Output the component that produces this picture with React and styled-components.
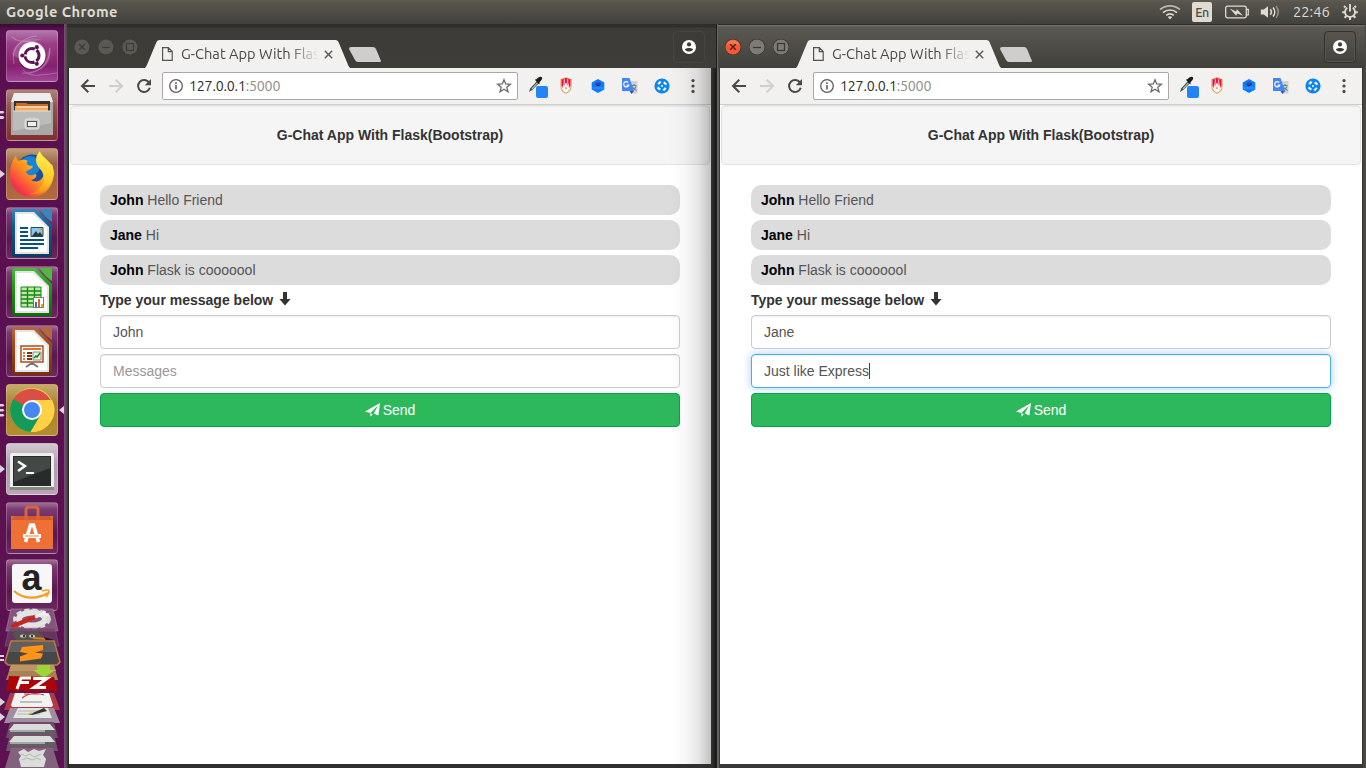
import React from "react";
import styled, { createGlobalStyle } from "styled-components";

const GlobalStyle = createGlobalStyle`
  * { box-sizing: border-box; }
  html, body { margin: 0; padding: 0; overflow: hidden; background: #2c2b29; }
  svg { display: block; flex: none; }
`;

const uiFont = `"Ubuntu", "Noto Sans", "Open Sans", sans-serif`;

/* ---------- desktop ---------- */
const Desktop = styled.div`
  width: 1366px;
  height: 768px;
  display: flex;
  flex-direction: column;
  overflow: hidden;
`;
const Panel = styled.header`
  height: 24px;
  flex: none;
  display: flex;
  align-items: center;
  padding: 0 8px 0 6px;
  background: linear-gradient(#5f5d53 0, #57554d 10%, #42413c 100%);
  color: #dfdbd2;
  font-family: ${uiFont};
`;
const AppName = styled.div`
  font-size: 14.67px;
  font-weight: 700;
  line-height: 24px;
  letter-spacing: 0.42px;
`;
const Indicators = styled.div`
  margin-left: auto;
  display: flex;
  align-items: center;
  height: 24px;
`;
const Keyboard = styled.div`
  width: 20px;
  height: 20px;
  margin: 0 13px 0 11px;
  border-radius: 2px;
  background: #dfdbd2;
  color: #4a4842;
  font-size: 12.5px;
  font-weight: 500;
  line-height: 21px;
  text-align: center;
  letter-spacing: -0.4px;
`;
const Clock = styled.div`
  margin: 0 12px 0 13px;
  font-size: 14.67px;
  line-height: 24px;
  width: 37px;
  white-space: nowrap;
`;
const Workspace = styled.main`
  flex: 1;
  display: flex;
  min-height: 0;
`;

/* ---------- launcher ---------- */
const Launcher = styled.nav`
  width: 65px;
  flex: none;
  display: flex;
  flex-direction: column;
  padding-top: 6px;
  background: linear-gradient(#3a0a34 0, #5a1050 6px, #5c1150 100%);
  border-right: 1px solid #7d4a76;
  overflow: hidden;
`;
const LauncherRow = styled.div`
  height: ${(p) => p.$h || 59}px;
  flex: none;
  display: grid;
  grid-template-columns: 6px 52px 6px;
`;
const Pips = styled.div`
  height: 52px;
  display: flex;
  flex-direction: column;
  justify-content: center;
`;
const Tile = styled.div`
  width: 52px;
  height: 52px;
  border-radius: 4px;
  border: 1px solid rgba(255, 255, 255, 0.22);
  background: ${(p) => p.$bg};
  svg { margin: -1px; }
`;
const FoldedRow = styled.div`
  height: ${(p) => p.$h}px;
  flex: none;
  svg { overflow: visible; }
`;

/* ---------- windows ---------- */
const WindowFrame = styled.section`
  width: ${(p) => (p.$active ? 649 : 652)}px;
  flex: none;
  display: flex;
  flex-direction: column;
  padding: 0 ${(p) => (p.$active ? 4 : 6)}px 4px ${(p) => (p.$active ? 3 : 4)}px;
  background: ${(p) =>
    p.$active
      ? "linear-gradient(90deg,#5b5a56 0,#72706b 1px,#454440 2px,#3a3936 3px,#3a3936 645px,#33322f 645px,#4a4845 647px,#4a4845 649px)"
      : "linear-gradient(90deg,#55544f 0,#4d4c47 2px,#252523 3px,#30302c 4px,#30302c 646px,#353433 646px,#222 650px,#111 651px,#2a2a2a 652px)"};
`;
const TitleBar = styled.div`
  height: 44px;
  flex: none;
  display: flex;
  align-items: flex-end;
  margin: 0 ${(p) => (p.$active ? "-3px 0 -2px" : "-5px 0 -2px")};
  padding: 0 ${(p) => (p.$active ? "9px 0 7px" : "11px 0 7px")};
  background: ${(p) =>
    p.$active
      ? "linear-gradient(#2d2c2a 0,#2d2c2a 1px,#7b7972 1px,#5b5951 3px,#403f3a 100%)"
      : "linear-gradient(#2c2b29 0,#34332f 2px,#282725 2px,#3c3b37 4px,#3e3d38 100%)"};
`;
const WindowButtons = styled.div`
  display: flex;
  gap: 8px;
  height: 44px;
  padding-top: 15px;
  margin-right: 7px;
`;
const Tab = styled.div`
  width: 206px;
  height: 28px;
  display: flex;
  align-items: center;
  padding-left: 17px;
  background: #f2f1f0;
  clip-path: path("M0 28 L1.500 26 L11.500 2 Q12.500 0 14.500 0 L190.500 0 Q192.500 0 193.500 2 L203.500 26 L205 28 Z");
`;
const TabTitle = styled.div`
  width: 137px;
  margin-left: 8px;
  overflow: hidden;
  white-space: nowrap;
  font: 14.67px/28px ${uiFont};
  color: #4a4844;
  mask-image: linear-gradient(90deg, #000 108px, transparent 138px);
`;
const NewTab = styled.div`
  width: 33px;
  height: 15px;
  margin: 0 0 6px -2px;
  background: #cfcecd;
  clip-path: path("M0 2 Q0 0 2 0 L24 0 Q26 0 27 2 L32 14 Q32 15 31 15 L9 15 Q7 15 6 13 Z");
`;
const Profile = styled.div`
  width: 32px;
  height: 32px;
  margin: 0 0 5px auto;
  display: grid;
  place-items: center;
  border: 1px solid ${(p) => (p.$active ? "#33322e" : "#46453f")};
  border-radius: 4px;
  box-shadow: ${(p) => (p.$active ? "inset 0 0 0 1px #57554e" : "none")};
`;
const Body = styled.div`
  position: relative;
  flex: 1;
  display: flex;
  flex-direction: column;
  background: #fff;
  ${(p) =>
    !p.$active &&
    `&::after {
      content: "";
      position: absolute;
      inset: 0 0 0 auto;
      width: 42px;
      pointer-events: none;
      background: linear-gradient(90deg, transparent, rgba(0,0,0,.025) 35%, rgba(0,0,0,.09) 68%, rgba(0,0,0,.24));
    }`}
`;
const Toolbar = styled.div`
  height: 37px;
  flex: none;
  display: flex;
  align-items: center;
  padding: 0 0 1px 11px;
  background: #f2f1f0;
  border-bottom: 1px solid #cfcdca;
`;
const NavButtons = styled.div`
  display: flex;
  gap: 12px;
`;
const Omnibox = styled.div`
  width: 356px;
  height: 28px;
  display: flex;
  align-items: center;
  margin-left: 10px;
  padding: 0 5px;
  background: #fff;
  border: 1px solid #a9a8a6;
  border-radius: 2px;
`;
const Url = styled.div`
  flex: 1;
  margin-left: 5px;
  font: 14.2px/26px ${uiFont};
  letter-spacing: -0.2px;
  color: #2b2a27;
  span { color: #8d8a86; }
`;
const Extensions = styled.div`
  display: flex;
  margin-left: 10px;
  gap: 11px;
  svg:first-child { overflow: visible; }
  svg:last-child { margin-left: 6.5px; }
`;

/* ---------- web page ---------- */
const Page = styled.div`
  padding: 0 1px;
  font: 14px/20px "Liberation Sans", Arial, sans-serif;
  color: #333;
`;
const Well = styled.div`
  padding: 19px;
  border: 1px solid #e3e3e3;
  border-radius: 4px;
  background: #f5f5f5;
  box-shadow: inset 0 1px 1px rgba(0, 0, 0, 0.05);
  text-align: center;
  font-weight: 700;
`;
const Chat = styled.div`
  display: flex;
  flex-direction: column;
  gap: 5px;
  padding: 20px 30px;
`;
const Message = styled.div`
  padding: 5px 10px;
  border-radius: 10px;
  background: #dcdcdc;
  color: #555;
  b { color: #000; }
`;
const Label = styled.div`
  display: flex;
  height: 20px;
  font-weight: 700;
  svg { margin: 1px 0 0 5px; }
`;
const Field = styled.div`
  height: 34px;
  display: flex;
  align-items: center;
  padding: 0 12px;
  border: 1px solid ${(p) => (p.$focus ? "#4cacea" : "#ccc")};
  border-radius: 4px;
  background: #fff;
  color: ${(p) => (p.$placeholder ? "#999" : "#555")};
  box-shadow: inset 0 1px 1px rgba(0, 0, 0, 0.075)${(p) => (p.$focus ? ", 0 0 8px rgba(102,175,233,.6)" : "")};
`;
const Caret = styled.i`
  width: 1px;
  height: 16px;
  background: #444;
`;
const Send = styled.div`
  height: 34px;
  display: flex;
  align-items: center;
  justify-content: center;
  gap: 3px;
  border: 1px solid #00a650;
  border-radius: 4px;
  background: #2eb85c;
  color: #fff;
`;

/* ---------- small icons ---------- */
const Wifi = () => (
  <svg width="22" height="16" viewBox="0 0 22 16" fill="none" stroke="#dfdbd2" strokeWidth="1.7">
    <path d="M1 5.6C6.8.6 15.2.6 21 5.6" opacity=".75" />
    <path d="M4 8.6c4-3.5 10-3.5 14 0M7.2 11.4c2.2-1.9 5.4-1.9 7.6 0" />
    <path d="M11 15.5 8.8 13c1.2-1 3.2-1 4.4 0z" fill="#dfdbd2" stroke="none" />
  </svg>
);
const Battery = () => (
  <svg width="24" height="14" viewBox="0 0 24 14">
    <rect x=".7" y="1.2" width="20.6" height="11.6" rx="1.8" fill="none" stroke="#dfdbd2" strokeWidth="1.3" />
    <path d="M21.5 4.4h1.8v5.4h-1.8" fill="none" stroke="#dfdbd2" strokeWidth="1.2" />
    <path d="M4.800 3.600 11 6.500 12 4.200 18 10.800 12.400 8.600 11.200 10.800z" fill="#dfdbd2" />
  </svg>
);
const Volume = () => (
  <svg width="20" height="16" viewBox="0 0 20 16" fill="none" stroke="#dfdbd2" strokeWidth="1.6">
    <path d="M.8 5.5h3L8 2.3v11.4l-4.2-3.2h-3z" fill="#dfdbd2" stroke="none" />
    <path d="M10.3 5.3c1.3 1.6 1.3 3.8 0 5.4" />
    <path d="M13 3.5c2.3 2.6 2.3 6.4 0 9" />
    <path d="M16 2c3 3.5 3 8.500 0 12" opacity=".45" />
  </svg>
);
const Cog = () => (
  <svg width="16" height="16" viewBox="0 0 16 16" fill="none" stroke="#dfdbd2">
    <path d="M5.300 3.800a5 5 0 1 0 5.400 0" strokeWidth="1.800" />
    <path d="M8 0v7.500" strokeWidth="1.900" />
    <path d="M3.500 3.500 2 2M12.500 3.500 14 2M3 8.200H.2M13 8.200h2.800M4.500 11.800l-1.900 2M11.500 11.800l1.900 2M8 13v3" strokeWidth="2" />
  </svg>
);

const WindowButton = ({ kind, active }) => {
  const close = active && kind === "close";
  const ink = close ? "#53210f" : active ? "#383733" : "#3c3b37";
  return (
    <svg width="16" height="16" viewBox="0 0 16 16">
      <circle cx="8" cy="8" r="8.200" fill={active ? "#35342f" : "#3a3935"} />
      <circle cx="8" cy="8" r="7.600" fill={close ? "#f15a35" : active ? "#7d7b74" : "#5b5953"} />
      {close && <path d="M1.500 6a6.800 6.800 0 0 1 13 0Q8 3 1.500 6" fill="#f98263" opacity=".7" />}
      {kind === "close" && <path d="M5.200 5.200l5.600 5.600M10.800 5.200l-5.600 5.600" stroke={ink} strokeWidth="1.400" />}
      {kind === "min" && <path d="M4 8.500h8" stroke={ink} strokeWidth="1.200" />}
      {kind === "max" && <rect x="4.500" y="4.500" width="7" height="7" fill="none" stroke={ink} strokeWidth="1.200" />}
    </svg>
  );
};
const FileIcon = () => (
  <svg width="11" height="14" viewBox="0 0 11 14" fill="none" stroke="#55534f" strokeWidth="1.200">
    <path d="M.6.6h5.700l3.900 4v8.800H.6z M6.300.6v4h3.900" />
  </svg>
);
const CloseX = () => (
  <svg width="9" height="9" viewBox="0 0 9 9" stroke="#5f5d5a" strokeWidth="1.500" style={{ marginLeft: 5.5 }}>
    <path d="M.8.8l7.400 7.400M8.200.8.8 8.200" />
  </svg>
);
const Person = () => (
  <svg width="14" height="14" viewBox="0 0 14 14">
    <circle cx="7" cy="7" r="7" fill="#fff" />
    <circle cx="7" cy="4.400" r="2.100" fill="#3c3b37" />
    <path d="M2.900 9.500C4 7.500 10 7.500 11.100 9.500 9.500 12.300 4.500 12.300 2.900 9.500" fill="#3c3b37" />
  </svg>
);
const Arrow = ({ dir }) => (
  <svg width="16" height="16" viewBox="0 0 16 16" fill="none" stroke={dir === "left" ? "#4a4947" : "#cfcecc"} strokeWidth="2">
    {dir === "left" ? <path d="M15 8H2.500M8.300 1.700 2 8l6.300 6.300" /> : <path d="M1 8h12.500M7.700 1.700 14 8l-6.300 6.300" />}
  </svg>
);
const Reload = () => (
  <svg width="16" height="16" viewBox="0 0 16 16" fill="none" stroke="#4a4947" strokeWidth="2">
    <path d="M13.200 4.800A6 6 0 1 0 13.800 9.800" />
    <path d="M15 1v6.200H8.800z" fill="#4a4947" stroke="none" />
  </svg>
);
const Info = () => (
  <svg width="16" height="16" viewBox="0 0 16 16">
    <circle cx="8" cy="8" r="6.300" fill="none" stroke="#5f5d5a" strokeWidth="1.300" />
    <path d="M8 7v4.600M8 4.300v1.700" stroke="#5f5d5a" strokeWidth="1.600" />
  </svg>
);
const Star = () => (
  <svg width="16" height="16" viewBox="0 0 16 16">
    <path d="M8 1.800 9.700 6l4.700.3-3.600 3 1.200 4.500L8 11.300l-4 2.500 1.200-4.500-3.600-3L6.300 6z" fill="none" stroke="#6b6967" strokeWidth="1.300" />
  </svg>
);
const Dropper = () => (
  <svg width="17" height="24" viewBox="0 0 17 24">
    <path d="M1 18 2.300 14.300 9 7l2.200 2L4.200 16z" fill="#39594b" />
    <path d="M4 14.800 9.300 9" stroke="#b9c9c0" strokeWidth="1.100" />
    <path d="M6.800 5.700 8.800 5C10.500 2.800 13 2 13.900 3.200s-.4 3-2.200 4.700L11.400 10.500z" fill="#1b1b1b" />
    <rect x="8" y="12" width="12" height="12" rx="2" fill="#2583f5" />
  </svg>
);
const Shield = () => (
  <svg width="21" height="24" viewBox="0 -2 21 24">
    <path d="M5 3.500Q7.500 3 10 1.800q2.500 1.200 5 1.700v7Q15 15 10 17.200 5 15 5 10.500z" fill="#fff" stroke="#d9a352" strokeWidth="1.100" />
    <path d="M5.500 3.500 10 2l4.500 1.500V9.500L13.200 12 10 6.500 6.800 12 5.500 9.500z" fill="#f20d3b" />
    <path d="M8.300 3.200v3.500L7 11.500M11.700 3.200v3.500l1.300 4.800" stroke="#fff" strokeWidth=".9" fill="none" />
    <path d="M8.500 12.500 10 10l1.500 2.500-1.500 1z" fill="#f6a3ab" />
  </svg>
);
const Hexagon = () => (
  <svg width="21" height="24" viewBox="0 -2 21 24">
    <path d="m10 3 6.300 3.400v7.200L10 17l-6.300-3.400V6.400z" fill="#0b7dfb" />
    <path d="M6.800 7.700 10 5.700l3.200 2L10 9.800z" fill="#493bb8" />
    <path d="M7.500 8.300 10 9.800l2.500-1.500" stroke="#252073" fill="none" />
    <path d="M4.800 12h10.400" stroke="#5fabff" strokeWidth="1.200" strokeDasharray="1 .6" />
  </svg>
);
const Translate = () => (
  <svg width="21" height="24" viewBox="0 -2 21 24">
    <path d="M8 5h9.500v12.500H11z" fill="#cfd2d5" />
    <path d="M11.500 9.500h5M14 8v1.500M12 10.500c1 2 2.500 3 4.500 4M16 10.500c-.8 2-2 3.500-4 4.500" stroke="#67838b" fill="none" strokeWidth="1.100" />
    <path d="M2 2h7.500L14 15H2z" fill="#4285f4" />
    <path d="M9.500 15H14l-2.500 3z" fill="#3a4fb6" />
    <path d="M8.200 6.500A2.600 2.600 0 1 0 8.800 9H6.500" stroke="#fff" strokeWidth="1.200" fill="none" />
  </svg>
);
const BlueBall = () => (
  <svg width="21" height="24" viewBox="0 -2 21 24">
    <circle cx="10" cy="10" r="7.600" fill="#0b86ee" />
    <g fill="#fff">
      <path d="M5.500 7.800 7.500 5 9.500 6 7.200 8.800z" />
      <path d="M12.200 5.500 15 7.500 14 9.500 11.200 7.200z" />
      <path d="M14.500 12.200 12.500 15 10.500 14 12.800 11.200z" />
      <path d="M7.800 14.500 5 12.500 6 10.500 8.800 12.800z" />
      <circle cx="10" cy="10" r="1" />
    </g>
  </svg>
);
const Dots = () => (
  <svg width="4" height="24" viewBox="0 -1 4 24" fill="#4a4947">
    <circle cx="2" cy="5.600" r="1.600" /><circle cx="2" cy="11" r="1.600" /><circle cx="2" cy="16.400" r="1.600" />
  </svg>
);
const DownArrow = () => (
  <svg width="14" height="16" viewBox="0 0 14 16"><path d="M5 1h4v7h3.600L7 14.500 1.400 8H5z" fill="#333" /></svg>
);
const Plane = () => (
  <svg width="15" height="14" viewBox="0 0 15 14" fill="#fff">
    <path d="M15 0 13.400 12.500 8.800 10.500 13 2.600 5.400 9.900 0 8.600z" />
    <path d="M5.200 10.300 7.800 11 5.500 13.800z" />
  </svg>
);

/* ---------- launcher icons ---------- */
const Ubuntu = () => (
  <svg width="52" height="52" viewBox="0 0 52 52" fill="none">
    <g stroke="#fff" strokeOpacity=".25" strokeWidth="1.100">
      <path d="M8 34C4 16 18 7 31 6M6 7c11 10 24-3 33 14M44 18c0 16-12 27-28 25M51 43c-14 2-28 5-34-3" />
    </g>
    <path d="M6 25C8 9 26 6 37 10 24 10 14 16 12 28zM44 16c3 18-8 27-26 27 14-1 23-9 24-21z" fill="#fff" opacity=".15" />
    <circle cx="26" cy="26.500" r="14" fill="#4a0a40" opacity=".35" />
    <circle cx="26" cy="25.500" r="13.500" fill="#fff" />
    <circle cx="26" cy="25.500" r="7" stroke="#611255" strokeWidth="3" strokeDasharray="12.700 1.960" strokeDashoffset="-8.300" />
    <g fill="#611255"><circle cx="16.300" cy="25.500" r="2.100" /><circle cx="30.800" cy="17.200" r="2.100" /><circle cx="30.800" cy="33.800" r="2.100" /></g>
  </svg>
);
const Files = () => (
  <svg width="52" height="52" viewBox="0 0 52 52">
    <path d="M8 4h36l3 9v33H5V13z" fill="#a9a9a7" />
    <path d="M8 4h36l3 9H5z" fill="#eee" />
    <rect x="8" y="12" width="36" height="12" fill="#37322d" />
    <path d="M10 14h10l2 1h20v7H10z" fill="#c76b2b" />
    <path d="M9 17h33v5H9z" fill="#f5a95c" /><path d="M11 18h31" stroke="#fff0df" />
    <path d="M7 22h38v24H7z" fill="#a8a8a6" /><path d="M7 22h38v12L7 42z" fill="#bcbcba" /><path d="M7 22h38" stroke="#e0e0e0" />
    <rect x="19" y="30" width="14" height="10" rx="2" fill="#c8c8c6" stroke="#e6e6e6" />
    <rect x="21.500" y="32.500" width="9" height="5" fill="#eee" stroke="#555" />
  </svg>
);
const Firefox = () => (
  <svg width="52" height="52" viewBox="0 0 52 52">
    <defs>
      <linearGradient id="fx" x1="1" y1="0" x2="0" y2="1"><stop offset="0" stopColor="#fff24a" /><stop offset=".5" stopColor="#ff9320" /><stop offset=".8" stopColor="#f7334a" /><stop offset="1" stopColor="#dd1b7a" /></linearGradient>
      <linearGradient id="fl" x1=".5" y1="0" x2=".3" y2="1"><stop offset="0" stopColor="#fff14b" /><stop offset=".6" stopColor="#ffc82c" /><stop offset="1" stopColor="#ff8a16" /></linearGradient>
    </defs>
    <circle cx="26" cy="22" r="15.500" fill="#1a4f9c" />
    <circle cx="24" cy="18" r="10" fill="#1585d8" />
    <path d="M10 7c0 3 1 5 3 6 3-2 7-1 9 0-3 2-1 5 5 5-1 4-6 4-7 6 2 4 5 4 10 2 2 3-3 6-5 6 7 4 13-1 13-8l8-8c5 15-2 32-20 33C12 49 3 38 4 25 4 17 7 12 10 7z" fill="url(#fx)" />
    <path d="M34 3c1 7 14 10 14 23-3 16-14 21-24 20 10-3 16-12 13-20-1-5-7-7-7-14 0-4 2-7 4-9z" fill="url(#fl)" />
  </svg>
);
const OfficeDoc = ({ dark, mid, light, children }) => (
  <svg width="52" height="52" viewBox="0 0 52 52">
    <defs>
      <linearGradient id={`doc${dark.slice(1)}`} x1="0" y1="0" x2="0" y2="1"><stop offset="0" stopColor={light} /><stop offset=".35" stopColor={mid} /><stop offset="1" stopColor={dark} /></linearGradient>
    </defs>
    <path d="M9 2h21l16 16v29q0 3-3 3H9q-3 0-3-3V5q0-3 3-3z" fill={`url(#doc${dark.slice(1)})`} />
    <path d="M34 2h10q2 0 2 2v11q-8-5-12-13z" fill={light} />
    <path d="M9 5h19l15 15v27H9z" fill="#e4e4e2" /><path d="M11 7h16l14 14v24H11z" fill="#fff" />
    {children}
  </svg>
);
const Writer = () => (
  <OfficeDoc dark="#083c60" mid="#0f5d90" light="#3389bf">
    <path d="M14 21h8M14 25h8M14 29h8M14 33h24M14 37h24M14 41h18" stroke="#0b4f7d" strokeWidth="2" />
    <path d="M25 20.500h12v9H25z" fill="#8ac6ed" stroke="#0b4f7d" /><path d="m26 29 4-5 2 3 2-2 3 4z" fill="#333" /><circle cx="35" cy="22.500" r="1.500" fill="#e6a219" />
  </OfficeDoc>
);
const Calc = () => (
  <OfficeDoc dark="#0d6a0b" mid="#259a1b" light="#4fba40">
    <path d="M15 21h20v20H15z" fill="#b9eaa8" stroke="#168411" /><path d="M15 25h20M15 29h20M15 33h20M15 37h20M21.500 21v20M28.500 21v20" stroke="#168411" strokeWidth="1.300" />
    <path d="M27.500 31.500h10v10h-10z" fill="#fff" stroke="#777" /><path d="M30 36v5" stroke="#3078be" strokeWidth="2" /><path d="M33 33v8" stroke="#df632c" strokeWidth="2" /><path d="M36 38v3" stroke="#e6ad0d" strokeWidth="2" />
  </OfficeDoc>
);
const Impress = () => (
  <OfficeDoc dark="#76300a" mid="#a04e18" light="#b5683c">
    <path d="M15 21h22v16H15z" fill="#fff" stroke="#b54b16" strokeWidth="1.500" /><path d="M17 24h18" stroke="#d77534" strokeWidth="2" />
    <path d="M17 28h2m-2 3h2m-2 3h2" stroke="#dd7845" strokeWidth="2" /><path d="M21 28h5m-5 3h5m-5 3h5" stroke="#813312" strokeWidth="2" />
    <path d="M27 27h8v8h-8z" fill="#e7f6e5" stroke="#888" /><path d="m28 33 2-2 1 1 3-4" stroke="#218019" fill="none" strokeWidth="1.500" />
    <path d="M26 37v3m-6 2 6-4 6 4" stroke="#777" strokeWidth="2" fill="none" />
  </OfficeDoc>
);
const Chrome = () => (
  <svg width="52" height="52" viewBox="0 0 52 52">
    <circle cx="26" cy="26" r="22" fill="#ffd246" />
    <path d="M26 26H47.500A22 22 0 0 0 7 15l10 16z" fill="#da4f43" />
    <path d="M7 15A22 22 0 0 0 24.500 48L34.500 31 26 26z" fill="#159b58" />
    <path d="M46 16H26l9 15-10 17A22 22 0 0 0 46 16z" fill="#ffd246" />
    <circle cx="26" cy="26" r="10" fill="#fff" /><circle cx="26" cy="26" r="8" fill="#4788ef" />
  </svg>
);
const Terminal = () => (
  <svg width="52" height="52" viewBox="0 0 52 52">
    <rect x="4" y="10" width="44" height="36" rx="2" fill="#eee" /><path d="M4 44h44v3H4z" fill="#888984" />
    <rect x="7" y="13" width="38" height="30" fill="#272b2a" /><path d="M8 14h36v11L8 39z" fill="#555956" opacity=".65" />
    <path d="m12 18.500 7 4.500-7 5" fill="none" stroke="#fff" strokeWidth="2.400" /><path d="M20 30h8" stroke="#fff" strokeWidth="2" />
  </svg>
);
const Software = () => (
  <svg width="52" height="52" viewBox="0 0 52 52">
    <path d="M5 14h42v33H5z" fill="#ee7034" /><path d="M5 18 8 14h36l3 4z" fill="#d25b29" />
    <path d="M20 18V8q0-3 3-3h6q3 0 3 3v10" fill="none" stroke="#d9653f" strokeWidth="3" />
    <path d="m19.500 40 5-17h3l5 17" fill="none" stroke="#fff" strokeWidth="3.600" />
    <path d="M17 34h18" stroke="#fff" strokeWidth="4" /><path d="M19 34h14" stroke="#ee7034" strokeWidth=".9" />
  </svg>
);
const Amazon = () => (
  <svg width="52" height="52" viewBox="0 0 52 52">
    <rect x="6" y="5" width="40" height="39" rx="3" fill="#f7f7f7" />
    <text x="25.500" y="31" textAnchor="middle" fontFamily="Liberation Sans, Arial, sans-serif" fontWeight="700" fontSize="36" fill="#222">a</text>
    <path d="M8 32c10 9 24 8 34 2" fill="none" stroke="#f99b20" strokeWidth="2.200" /><path d="M36 32q7-2 7 0 0 3-3 6" fill="none" stroke="#f99b20" strokeWidth="1.600" />
  </svg>
);

const Running = ({ count }) => (
  <Pips>
    <svg width="6" height="14" viewBox="0 0 6 14" fill="#ded3dc">
      {count === 1 && <path d="M0 3l5 4-5 4z" />}
      {count === 2 && <path d="M0 3h3l1.500 1L3 5.500H0zM0 8h3l1.500 1.500L3 11H0z" />}
      {count === 3 && <path d="M0 1h3l1.500 1.200L3 3.500H0zM0 6h3l1.500 1.200L3 8.500H0zM0 11h3l1.500 1.200L3 13.500H0z" />}
    </svg>
  </Pips>
);
const Focused = () => (
  <Pips><svg width="6" height="10" viewBox="0 0 6 10"><path d="M6 1v8L1 5z" fill="#ded3dc" /></svg></Pips>
);

const clear = "linear-gradient(#a27297 0,#7b3b73 12%,#5a174e 60%,#6a285f)";
const apps = [
  { id: "dash", Icon: Ubuntu, bg: "linear-gradient(#b278ab 0,#9b3f88 25%,#85206f 70%,#a04696)" },
  { id: "files", Icon: Files, bg: "linear-gradient(#ae837b 0,#91524b 35%,#81302e)", count: 2 },
  { id: "firefox", Icon: Firefox, bg: "linear-gradient(#c39e78 0,#9a6445 30%,#b36a3e)", count: 1 },
  { id: "writer", Icon: Writer, bg: clear },
  { id: "calc", Icon: Calc, bg: clear },
  { id: "impress", Icon: Impress, bg: clear },
  { id: "chrome", Icon: Chrome, bg: "linear-gradient(#c6ab6b 0,#a6822f 40%,#b58d30)", count: 3, focused: true },
  { id: "terminal", Icon: Terminal, bg: "linear-gradient(#d4c9d2 0,#aba1aa 40%,#b5a7b4)", count: 1 },
  { id: "software", Icon: Software, bg: clear, h: 57 },
  { id: "amazon", Icon: Amazon, bg: clear, h: 50 },
];

const folded = [
  { id: "settings", h: 20, art: (
    <>
      <path d="M11 0h42l5 22H6z" fill="#84547c" stroke="#ad8ca8" strokeWidth=".6" />
      <ellipse cx="32" cy="10" rx="13" ry="6.500" fill="none" stroke="#e4e4e3" strokeWidth="6" />
      <ellipse cx="32" cy="10" rx="17.500" ry="9" fill="none" stroke="#ddd" strokeWidth="3" strokeDasharray="5 3" />
      <path d="m13 17 22-9" stroke="#c82720" strokeWidth="4.500" strokeLinecap="round" /><path d="m35 8 8-3 6 1m-6-1 2-3" stroke="#eee" strokeWidth="3" fill="none" />
    </>) },
  { id: "gimp", h: 12, art: (
    <>
      <path d="M9-1h46l4 18H5z" fill="#6e4267" opacity=".7" stroke="#9a7895" strokeWidth=".5" />
      <path d="M12 5 18 1l8 3 10-2 7 4-2 7H18z" fill="#55534b" /><ellipse cx="23" cy="7" rx="3" ry="1.600" fill="#ccc" /><ellipse cx="32" cy="7" rx="3" ry="1.600" fill="#ccc" /><circle cx="24" cy="7" r="1" /><circle cx="32" cy="7" r="1" />
      <path d="m33 9 14 1" stroke="#e07d1b" strokeWidth="2" /><path d="m44 8 10 3-6 5z" fill="#201a20" />
    </>) },
  { id: "sublime", h: 24, count: 2, art: (
    <>
      <path d="M11 0h43l6 21-3 3H8l-3-3z" fill="#484747" stroke="#bd7b43" strokeWidth="1.500" /><path d="M11 1h43l3 10H8z" fill="#777" opacity=".5" />
      <path d="m22 6 21-2v5l-8 2.500 8 1-2 5-21 3v-5l8-3-8-1.500z" fill="#ff9418" />
    </>) },
  { id: "package", h: 11, art: (
    <>
      <path d="M11 0h43l4 15H6z" fill="#a88053" /><path d="M11 0h43l2 6H9z" fill="#bc9565" />
      <path d="M37 0h13v5h5L44 13 33 5h4z" fill="#9dd43b" />
    </>) },
  { id: "filezilla", h: 17, art: (
    <>
      <path d="m9 0 45 1 4 13-3 2-4-2-4 2-5-2-5 2-5-2-5 2-5-2-5 2-5-2-6 1z" fill="#ab0508" />
      <path d="M17 13 21 2h10M20 6.500h9M33 2.500h14l-13 9h12" fill="none" stroke="#fff" strokeWidth="3" />
    </>) },
  { id: "viewer", h: 15, count: 1, art: (
    <>
      <path d="M10 0h44l6 17H4z" fill="#bd3d45" opacity=".9" /><path d="M15 0h34l4 12q0 2-2 2H13q-2 0-2-2z" fill="#f2f2f1" />
      <path d="M22 5c8-6 16-5 22-3M24 1h15" stroke="#c23b3c" strokeWidth="1.100" fill="none" /><path d="M20 9h22" stroke="#888" />
    </>) },
  { id: "editor", h: 15, count: 1, art: (
    <>
      <path d="M10 0h44l6 15H4z" fill="#a18da0" /><path d="M18 0h30l4 10H13z" fill="#e5e5e3" /><path d="M18 3h20M17 6h23" stroke="#aaa" strokeWidth=".8" />
      <path d="m28 7 16-7 3 3-15 4z" fill="#333" /><path d="m28 7 3-3 2 2z" fill="#d8af34" />
    </>) },
  { id: "disk", h: 12, art: (
    <>
      <path d="M10-1h44l4 16H6z" fill="#704a69" /><path d="M14 1h36l5 6H9z" fill="#d9dcd9" /><path d="M9 7h46v4H9z" fill="#5d6160" /><path d="M10 8h35" stroke="#eee" />
    </>) },
  { id: "disk2", h: 14, art: (
    <>
      <path d="M10-1h44l4 17H6z" fill="#75516f" /><path d="M14 1h36l5 6H9z" fill="#d9dcd9" /><path d="M9 7h46v4H9z" fill="#5d6160" /><path d="M10 8h35" stroke="#eee" />
    </>) },
  { id: "trash", h: 19, art: (
    <>
      <path d="M11-1h42l6 20H5z" fill="#82627c" /><path d="m18 3 6-3 4 3 6-3 5 2 7-2-3 6 3 4-2 8H21l-2-8 2-3z" fill="#dcdedc" />
      <path d="m21 5 5 2 4-2 4 3 7-3M22 11l5-2 5 2 5-2 4 2" stroke="#a9abaa" strokeWidth=".8" fill="none" />
    </>) },
];

/* ---------- browser window ---------- */
const messages = [["John", "Hello Friend"], ["Jane", "Hi"], ["John", "Flask is cooooool"]];

const BrowserWindow = ({ active, name, draft }) => (
  <WindowFrame $active={active}>
    <TitleBar $active={active}>
      <WindowButtons>
        {["close", "min", "max"].map((k) => <WindowButton key={k} kind={k} active={active} />)}
      </WindowButtons>
      <Tab>
        <FileIcon />
        <TabTitle>G-Chat App With Flask</TabTitle>
        <CloseX />
      </Tab>
      <NewTab />
      <Profile $active={active}><Person /></Profile>
    </TitleBar>
    <Body $active={active}>
      <Toolbar>
        <NavButtons><Arrow dir="left" /><Arrow dir="right" /><Reload /></NavButtons>
        <Omnibox>
          <Info />
          <Url>127.0.0.1<span>:5000</span></Url>
          <Star />
        </Omnibox>
        <Extensions>
          <Dropper /><Shield /><Hexagon /><Translate /><BlueBall /><Dots />
        </Extensions>
      </Toolbar>
      <Page>
        <Well>G-Chat App With Flask(Bootstrap)</Well>
        <Chat>
          {messages.map(([who, text]) => (
            <Message key={who + text}><b>{who}</b> {text}</Message>
          ))}
          <Label>Type your message below <DownArrow /></Label>
          <Field>{name}</Field>
          <Field $placeholder={!draft} $focus={active}>{draft || "Messages"}{active && <Caret />}</Field>
          <Send><Plane />Send</Send>
        </Chat>
      </Page>
    </Body>
  </WindowFrame>
);

export default function App() {
  return (
    <Desktop>
      <GlobalStyle />
      <Panel>
        <AppName>Google Chrome</AppName>
        <Indicators>
          <Wifi />
          <Keyboard>En</Keyboard>
          <Battery />
          <svg width="11" height="1" />
          <Volume />
          <Clock>22:46</Clock>
          <Cog />
        </Indicators>
      </Panel>
      <Workspace>
        <Launcher>
          {apps.map(({ id, Icon, bg, count, focused, h }) => (
            <LauncherRow key={id} $h={h}>
              <Running count={count} />
              <Tile $bg={bg}><Icon /></Tile>
              {focused && <Focused />}
            </LauncherRow>
          ))}
          {folded.map(({ id, h, art, count }) => (
            <FoldedRow key={id} $h={h}>
              <svg width="64" height={h} viewBox={`0 0 64 ${h}`}>
                {art}
                {count === 1 && <path d="M0 5l5 4-5 4z" fill="#ded3dc" />}
                {count === 2 && <path d="M0 14h4v2H0zM0 18h4v2H0z" fill="#ded3dc" />}
              </svg>
            </FoldedRow>
          ))}
        </Launcher>
        <BrowserWindow name="John" />
        <BrowserWindow active name="Jane" draft="Just like Express" />
      </Workspace>
    </Desktop>
  );
}
